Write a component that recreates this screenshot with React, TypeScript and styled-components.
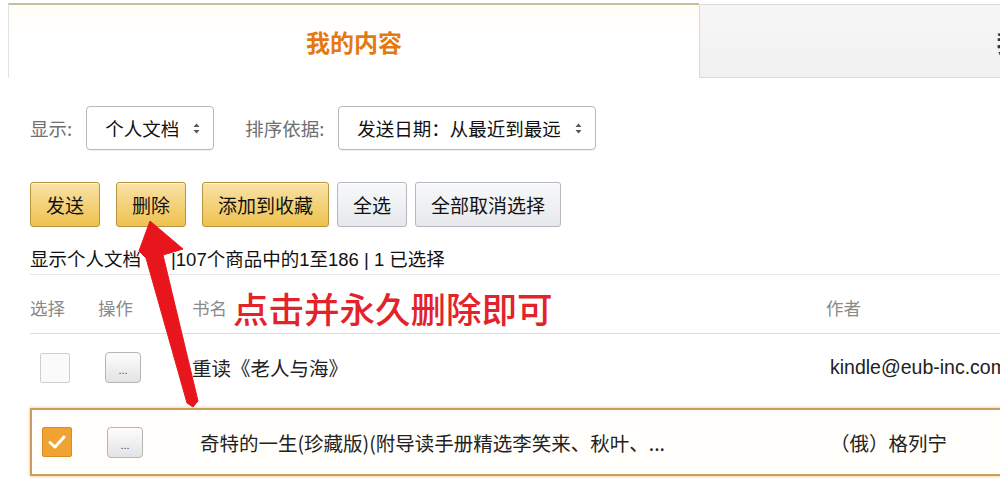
import styled, { createGlobalStyle } from 'styled-components'

const GlobalStyle = createGlobalStyle`
  html, body {
    margin: 0;
    padding: 0;
    background: #fff;
    overflow: hidden;
  }
  body {
    font-family: "Liberation Sans", "Noto Sans CJK SC", sans-serif;
    color: #111;
  }
`

const Page = styled.div`
  position: relative;
  width: 1000px;
  height: 479px;
  overflow: hidden;
`

const TabBar = styled.div`
  display: flex;
  width: 1400px;
  margin: 3px 0 0 8px;
`

const Tab = styled.div<{ $active?: boolean }>`
  box-sizing: border-box;
  width: 691px;
  display: flex;
  align-items: center;
  justify-content: center;
  font-family: "Noto Sans CJK SC", sans-serif;
  font-size: 24px;
  ${(p) =>
    p.$active
      ? `
    height: 75px;
    border-top: 2px solid #c4bf9f;
    border-left: 1px solid #e2e2e2;
    background: linear-gradient(#fffdf5, #fff 40%);
    color: #e47911;
    font-weight: 700;
  `
      : `
    height: 74px;
    margin-top: 1px;
    border: 1px solid #dadada;
    background: linear-gradient(#f6f6f6, #f1f1f1);
    color: #333;
    font-weight: 700;
  `}
`

const Content = styled.div`
  padding-left: 30px;
  width: 1200px;
`

const FilterRow = styled.div`
  display: flex;
  align-items: center;
  height: 44px;
  margin-top: 28px;
`

const Label = styled.span<{ $spaced?: boolean }>`
  font-family: "Noto Sans CJK SC", sans-serif;
  font-size: 18.5px;
  color: #6f6f6f;
  margin-right: 14px;
  margin-left: ${(p) => (p.$spaced ? '31px' : '0')};
`

const Select = styled.div`
  box-sizing: border-box;
  height: 44px;
  display: flex;
  align-items: center;
  gap: 14px;
  padding: 0 13px 0 18px;
  border: 1px solid #b9b9b9;
  border-radius: 4px;
  box-shadow: 0 1px 1px rgba(0, 0, 0, 0.06);
  font-family: "Noto Sans CJK SC", sans-serif;
  font-size: 18.5px;
  color: #111;
`

const ButtonRow = styled.div`
  display: flex;
  gap: 8px;
  margin-top: 32px;
`

const PrimaryGroup = styled.div`
  display: flex;
  gap: 16px;
`

const ActionButton = styled.button<{ $primary?: boolean }>`
  box-sizing: border-box;
  height: 45px;
  padding: 0 15px;
  border-radius: 3px;
  font-family: "Noto Sans CJK SC", sans-serif;
  font-size: 19px;
  color: #111;
  cursor: pointer;
  border: 1px solid ${(p) => (p.$primary ? '#b8943e' : '#b4b7bd')};
  background: ${(p) =>
    p.$primary
      ? 'linear-gradient(#f8e2a6, #efc24f)'
      : 'linear-gradient(#f8f9fa, #e6e8eb)'};
  box-shadow: inset 0 1px 0 rgba(255, 255, 255, 0.6);
`

const Status = styled.div`
  padding: 21px 0 2px;
  line-height: 24px;
  font-size: 18.5px;
  color: #111;
  border-bottom: 1px solid #e6e6e6;
`

const Count = styled.span`
  margin-left: 30px;
`

const Columns = `
  display: grid;
  grid-template-columns: 68px 94px 634px 1fr;
  align-items: center;
  box-sizing: border-box;
`

const HeaderRow = styled.div`
  ${Columns}
  height: 59px;
  padding-top: 7px;
  border-bottom: 1px solid #dedede;
  font-family: "Noto Sans CJK SC", sans-serif;
  font-size: 17.5px;
  color: #8a8a8a;
`

const HeaderTitle = styled.div`
  display: flex;
  align-items: center;
`

const Note = styled.span`
  margin-left: 6px;
  font-family: "Noto Sans CJK SC", sans-serif;
  font-size: 35.5px;
  font-weight: 500;
  line-height: 1;
  color: #e4222a;
`

const Row = styled.div<{ $selected?: boolean }>`
  ${Columns}
  height: 67px;
  ${(p) =>
    p.$selected &&
    `
    height: 68px;
    margin-top: 7px;
    border: 2px solid #c99d5e;
    background: #fffefa;
    box-shadow: 0 0 3px rgba(232, 170, 80, 0.8);
  `}
`

const Checkbox = styled.span<{ $checked?: boolean }>`
  box-sizing: border-box;
  width: 30px;
  height: 30px;
  margin-left: 10px;
  display: flex;
  align-items: center;
  justify-content: center;
  border-radius: 2px;
  border: 1px solid ${(p) => (p.$checked ? '#dc8b22' : '#cfcfcf')};
  background: ${(p) => (p.$checked ? '#f0a232' : '#fafafa')};
`

const MoreButton = styled.span`
  box-sizing: border-box;
  width: 36px;
  height: 31px;
  margin-left: 7px;
  display: flex;
  align-items: center;
  justify-content: center;
  padding-top: 5px;
  border: 1px solid #b5b5b5;
  border-radius: 4px;
  background: linear-gradient(#fdfdfd, #e3e3e3);
  font-size: 11px;
  color: #444;
`

const Cell = styled.div<{ $shift?: boolean }>`
  padding-left: ${(p) => (p.$shift ? '6px' : '0')};
  font-family: "Noto Sans CJK SC", sans-serif;
  font-size: 19.5px;
  color: #222;
  white-space: nowrap;
`

const Author = styled(Cell)`
  padding-left: ${(p) => (p.$shift ? '2px' : '4px')};
  font-family: "Liberation Sans", "Noto Sans CJK SC", sans-serif;
`

const Overlay = styled.svg`
  position: absolute;
  left: 0;
  top: 0;
  pointer-events: none;
`

function SortArrows() {
  return (
    <svg width="7" height="11" viewBox="0 0 7 11">
      <path d="M3.5 0.5 L6.5 4 L0.5 4 Z M3.5 10.5 L6.5 7 L0.5 7 Z" fill="#555" />
    </svg>
  )
}

const books = [
  { title: '重读《老人与海》', author: 'kindle@eub-inc.com', selected: false },
  {
    title: '奇特的一生(珍藏版)(附导读手册精选李笑来、秋叶、...',
    author: '（俄）格列宁',
    selected: true,
  },
]

export default function App() {
  return (
    <Page>
      <GlobalStyle />
      <TabBar>
        <Tab $active>我的内容</Tab>
        <Tab>我的设备</Tab>
      </TabBar>
      <Content>
        <FilterRow>
          <Label>显示:</Label>
          <Select>
            个人文档 <SortArrows />
          </Select>
          <Label $spaced>排序依据:</Label>
          <Select>
            发送日期：从最近到最远 <SortArrows />
          </Select>
        </FilterRow>
        <ButtonRow>
          <PrimaryGroup>
            <ActionButton $primary>发送</ActionButton>
            <ActionButton $primary>删除</ActionButton>
            <ActionButton $primary>添加到收藏</ActionButton>
          </PrimaryGroup>
          <ActionButton>全选</ActionButton>
          <ActionButton>全部取消选择</ActionButton>
        </ButtonRow>
        <Status>
          显示个人文档<Count>|107个商品中的1至186 | 1 已选择</Count>
        </Status>
        <HeaderRow>
          <span>选择</span>
          <span>操作</span>
          <HeaderTitle>
            书名<Note>点击并永久删除即可</Note>
          </HeaderTitle>
          <span>作者</span>
        </HeaderRow>
        {books.map((b) => (
          <Row key={b.title} $selected={b.selected}>
            <Checkbox $checked={b.selected}>
              {b.selected && (
                <svg width="20" height="16" viewBox="0 0 20 16">
                  <path
                    d="M3 8.5 L8 13 L17 3"
                    fill="none"
                    stroke="#fff"
                    strokeWidth="3"
                    strokeLinecap="round"
                    strokeLinejoin="round"
                  />
                </svg>
              )}
            </Checkbox>
            <MoreButton>...</MoreButton>
            <Cell $shift={b.selected}>{b.title}</Cell>
            <Author $shift={b.selected}>{b.author}</Author>
          </Row>
        ))}
      </Content>
      <Overlay width="1000" height="479" viewBox="0 0 1000 479">
        <polygon
          points="150,221 183,249 163,255 198,401 193,407 187,403 146,258 139,251"
          fill="#e8161c"
          stroke="#e8161c"
          strokeWidth="1"
          strokeLinejoin="round"
        />
      </Overlay>
    </Page>
  )
}
